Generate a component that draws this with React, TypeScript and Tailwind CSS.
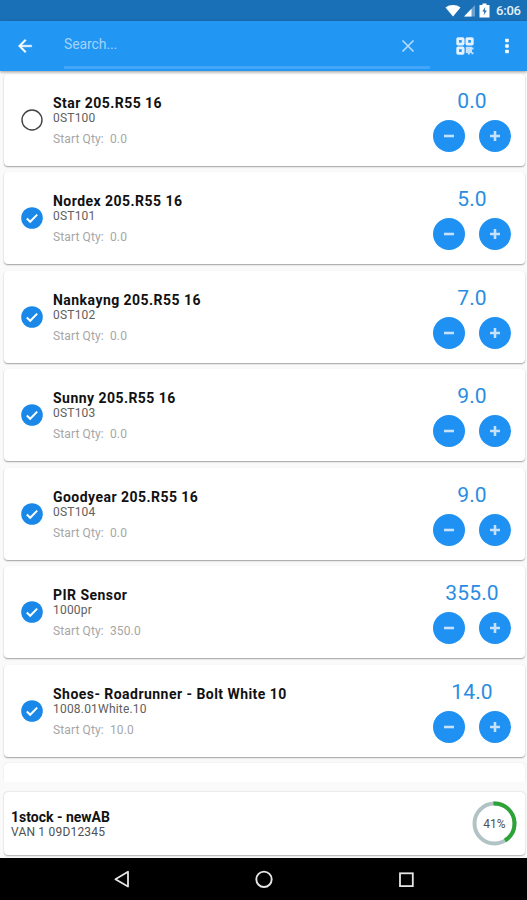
const items = [
  { name: 'Star 205.R55 16', code: '0ST100', start: '0.0', qty: '0.0', checked: false },
  { name: 'Nordex 205.R55 16', code: '0ST101', start: '0.0', qty: '5.0', checked: true },
  { name: 'Nankayng 205.R55 16', code: '0ST102', start: '0.0', qty: '7.0', checked: true },
  { name: 'Sunny 205.R55 16', code: '0ST103', start: '0.0', qty: '9.0', checked: true },
  { name: 'Goodyear 205.R55 16', code: '0ST104', start: '0.0', qty: '9.0', checked: true },
  { name: 'PIR Sensor', code: '1000pr', start: '350.0', qty: '355.0', checked: true },
  { name: 'Shoes- Roadrunner - Bolt White 10', code: '1008.01White.10', start: '10.0', qty: '14.0', checked: true },
];

type Item = (typeof items)[number];

function StatusBar() {
  return (
    <div className="flex h-[21px] shrink-0 items-center justify-end bg-[#1a70b7] pr-[5px] text-white">
      <svg className="mr-[2px] h-[13px] w-[16px]" viewBox="0 0 16 13" fill="currentColor">
        <path d="M.5 3.500C4.600.2 11.400.2 15.500 3.500L8 12.500Z" />
      </svg>
      <svg className="mr-[3px] h-[13px] w-[13px]" viewBox="0 0 13 13" fill="currentColor">
        <path d="M1 12.500 12 1v11.500Z" opacity=".35" />
        <path d="M1 12.500 8.500 4.700v7.800Z" />
      </svg>
      <svg className="mr-[6px] h-[15px] w-[11px]" viewBox="0 0 11 15">
        <path d="M3.500.5h4v1.500H10.500v12.500H.5V2h3Z" fill="currentColor" />
        <path d="M6.300 4 3.300 8.600h2L4.700 12.300 7.800 7.500H5.700Z" fill="#1a70b7" />
      </svg>
      <span className="w-[26px] whitespace-nowrap text-[13px] leading-none font-medium tracking-[-0.2px] text-[#e6f0f8]">6:06</span>
    </div>
  );
}

function Header() {
  return (
    <header className="relative z-10 flex h-[50px] shrink-0 items-start bg-[#2196f3] text-white shadow-[0_1px_3px_rgba(0,0,0,0.4)]">
      <svg className="mt-[15px] ml-[15px] h-5 w-5" viewBox="0 0 24 24" fill="currentColor" stroke="currentColor" strokeWidth=".5">
        <path d="M20 11H7.830l5.590-5.590L12 4l-8 8 8 8 1.410-1.410L7.830 13H20z" />
      </svg>
      <div className="ml-[29px] flex h-[48px] w-[366px] justify-between border-b-[3px] border-[#42a5f7]">
        <span className="mt-[13px] text-[14px] leading-5 tracking-[-0.1px] text-[#a4d3fc]">Search...</span>
        <svg className="mt-[17px] mr-[14px] h-4 w-4" viewBox="0 0 16 16" stroke="#b9dcfb" strokeWidth="1.600">
          <path d="m2.500 2.500 11 11m0-11-11 11" />
        </svg>
      </div>
      <svg className="mt-[16px] ml-[26px] h-[18px] w-[18px]" viewBox="0 0 18 18" fill="none" stroke="#e4f1fe" strokeWidth="2.800">
        <rect x="1.700" y="1.700" width="5.400" height="5.400" rx=".4" />
        <rect x="10.900" y="1.700" width="5.400" height="5.400" rx=".4" />
        <rect x="1.700" y="10.900" width="5.400" height="5.400" rx=".4" />
        <rect x="9.800" y="9.800" width="6.200" height="6.200" fill="#c6e1fc" stroke="none" />
        <path d="M15.200 11.500h2.300M11.800 16.500h2M15.500 16.300h2" stroke="#c6e1fc" strokeWidth="2" />
      </svg>
      <svg className="mt-[17px] ml-[30px] h-4 w-4" viewBox="0 0 16 16" fill="currentColor">
        <rect x="1.200" y=".7" width="3.600" height="3.600" rx=".8" />
        <rect x="1.200" y="6.200" width="3.600" height="3.600" rx=".8" />
        <rect x="1.200" y="11.700" width="3.600" height="3.600" rx=".8" />
      </svg>
    </header>
  );
}

function StepButton({ plus }: { plus?: boolean }) {
  return (
    <button className="flex h-8 w-8 items-center justify-center rounded-full bg-[#1e91f2]" aria-label={plus ? 'Increase' : 'Decrease'}>
      <svg className="h-3 w-3" viewBox="0 0 12 12" stroke="#c5e1fb" strokeWidth="2.600">
        <path d={plus ? 'M1 6h10M6 1v10' : 'M1 6h10'} />
      </svg>
    </button>
  );
}

function ItemCard({ item }: { item: Item }) {
  return (
    <div className="flex h-[92px] shrink-0 rounded-[4px] bg-white pr-[14px] pl-[17px] shadow-[0_1px_1.5px_rgba(0,0,0,0.36)]">
      <svg className="mt-[35px] h-[22px] w-[22px]" viewBox="0 0 22 22" fill="none">
        {item.checked ? (
          <>
            <circle cx="11" cy="11" r="10.800" fill="#1a88e8" />
            <path d="m5.800 11.500 3.400 3.300 7-7.200" stroke="white" strokeWidth="2" />
          </>
        ) : (
          <circle cx="11" cy="11" r="10" stroke="#424242" strokeWidth="1.400" />
        )}
      </svg>
      <div className="ml-[10px] grow whitespace-pre">
        <div className="mt-[21px] text-[14px] leading-[16px] font-bold tracking-[0.46px] text-[#111]">{item.name}</div>
        <div className="text-[12px] leading-[14px] tracking-[0.2px] text-[#606060]">{item.code}</div>
        <div className="mt-[7px] text-[12px] leading-[14px] tracking-[0.120px] text-[#a6a6a6]">{'Start Qty:  ' + item.start}</div>
      </div>
      <div className="w-[78px]">
        <div className="mt-[15px] text-center text-[21px] leading-[24px] tracking-[0.2px] text-[#2a8de2]">{item.qty}</div>
        <div className="mt-[7px] flex justify-between">
          <StepButton />
          <StepButton plus />
        </div>
      </div>
    </div>
  );
}

function SummaryCard() {
  return (
    <div className="mr-[2px] ml-[4px] flex h-[63px] shrink-0 items-center justify-between rounded-[4px] bg-white pr-[8px] pl-[7px] shadow-[0_0.500px_1.5px_rgba(0,0,0,0.3)]">
      <div className="pt-[2px]">
        <div className="text-[14px] leading-[15px] font-bold text-[#111]">1stock - newAB</div>
        <div className="text-[12px] leading-[14px] tracking-[0.2px] text-[#505050]">VAN 1 09D12345</div>
      </div>
      <div className="grid h-[45px] w-[45px] place-items-center">
        <svg className="col-start-1 row-start-1 h-[45px] w-[45px]" viewBox="0 0 45 45" fill="none" strokeWidth="4">
          <circle cx="22.500" cy="22.500" r="20" stroke="#b2c3c6" />
          <circle cx="22.500" cy="22.500" r="20" stroke="#2ca335" pathLength="100" strokeDasharray="42 58" transform="rotate(-93 22.500 22.500)" />
        </svg>
        <span className="col-start-1 row-start-1 text-[12px] leading-none text-[#505050]">41%</span>
      </div>
    </div>
  );
}

function NavBar() {
  return (
    <nav className="flex h-[42px] shrink-0 items-center justify-between bg-black pr-[113px] pl-[112px] text-[#e5e5e5]">
      <svg className="h-[18px] w-[18px]" viewBox="0 0 18 18" fill="none" stroke="currentColor" strokeWidth="1.800" strokeLinejoin="round">
        <path d="M16 1.800v14.700L3.400 9.200Z" />
      </svg>
      <svg className="h-[18px] w-[18px]" viewBox="0 0 18 18" fill="none" stroke="currentColor" strokeWidth="1.900">
        <circle cx="9" cy="9.300" r="7.700" />
      </svg>
      <svg className="h-[16px] w-[16px]" viewBox="0 0 16 16" fill="none" stroke="currentColor" strokeWidth="1.800">
        <rect x="2" y="2.300" width="12.800" height="12.800" />
      </svg>
    </nav>
  );
}

export default function App() {
  return (
    <div className="flex h-[900px] w-[527px] flex-col overflow-hidden bg-[#fafafa] font-['Roboto',sans-serif]">
      <StatusBar />
      <Header />
      <main className="flex h-[711px] shrink-0 flex-col gap-[6.450px] overflow-hidden pt-[3px] pr-[2px] pl-[4px]">
        {items.map((item) => (
          <ItemCard key={item.code} item={item} />
        ))}
        <div className="h-[92px] shrink-0 rounded-[4px] bg-white shadow-[0_0_1.5px_rgba(0,0,0,0.15)]" />
      </main>
      <div className="h-[10px] shrink-0" />
      <SummaryCard />
      <div className="h-[3px] shrink-0" />
      <NavBar />
    </div>
  );
}
